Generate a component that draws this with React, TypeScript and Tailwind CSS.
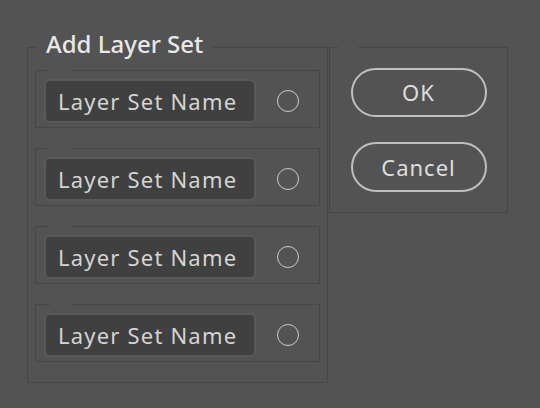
import React from "react";

const FONT = { fontFamily: '"Noto Sans", "Open Sans", sans-serif' };

function Row() {
  return (
    <fieldset className="border border-[#464646] w-[285px] h-[58px] pl-[8px] pr-[8px] flex items-start">
      <legend className="ml-[6px] w-[21px] h-0 p-0"></legend>
      <div className="flex items-center mt-[8px]">
        <div className="w-[212px] h-[44px] rounded-[6px] bg-[#404040] border-2 border-[#595959] flex items-center pl-[12px]">
          <span className="text-[22px] leading-none tracking-[1.2px] text-[#d4d4d4] -mt-[1px]">Layer Set Name</span>
        </div>
        <div className="ml-[21px] w-[22px] h-[22px] rounded-full border-[1.5px] border-[#cacaca]"></div>
      </div>
    </fieldset>
  );
}

export default function App() {
  return (
    <div className="w-[540px] h-[408px] bg-[#535353] overflow-hidden" style={FONT}>
      <div className="flex items-start pl-[27px] pt-[30px]">
        <fieldset className="border border-[#464646] w-[301px] h-[353px] px-[7px] flex flex-col">
          <legend className="ml-[1px] w-[177px] h-[34px] pl-[10px] pr-0 pt-0 pb-[7px] text-[24px] leading-[27px] font-medium text-[#e8e8e8]">
            Add Layer Set
          </legend>
          <div className="flex flex-col gap-[20px] pt-[6px]">
            <Row />
            <Row />
            <Row />
            <Row />
          </div>
        </fieldset>
        <fieldset className="ml-[1px] mt-[3px] border border-[#464646] w-[179px] h-[180px] flex flex-col items-center gap-[25px]">
          <legend className="ml-[8px] w-[20px] h-[28px] p-0"></legend>
          <button className="mt-[7px] w-[136px] h-[49px] rounded-full border-2 border-[#bfbfbf] text-[22px] tracking-[1px] text-[#dedede] flex items-center justify-center">
            OK
          </button>
          <button className="w-[136px] h-[50px] rounded-full border-2 border-[#bfbfbf] text-[22px] tracking-[1px] text-[#dedede] flex items-center justify-center">
            Cancel
          </button>
        </fieldset>
      </div>
    </div>
  );
}
